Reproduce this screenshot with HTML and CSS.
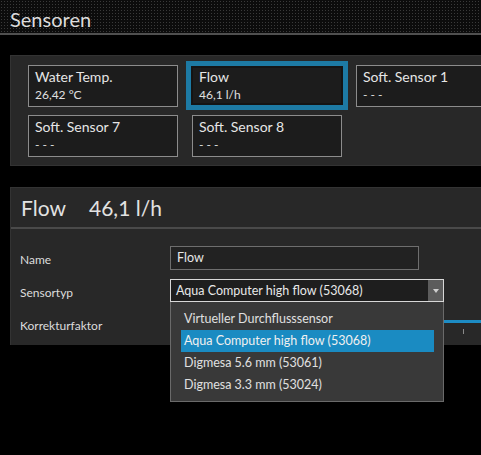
FILE: index.html
```html
<!DOCTYPE html>
<html lang="de">
<head>
<meta charset="utf-8">
<title>Sensoren</title>
<link rel="stylesheet" href="styles.css">
</head>
<body>
<header class="topbar"><h1 class="topbar-title">Sensoren</h1></header>

<section class="sensor-panel">
  <div class="sensor-grid">
    <div class="card"><div class="card-name">Water Temp.</div><div class="card-value">26,42 °C</div></div>
    <div class="card card-selected"><div class="card-name">Flow</div><div class="card-value">46,1 l/h</div></div>
    <div class="card"><div class="card-name">Soft. Sensor 1</div><div class="card-value">- - -</div></div>
    <div class="card"><div class="card-name">Soft. Sensor 2</div><div class="card-value">- - -</div></div>
    <div class="card"><div class="card-name">Soft. Sensor 7</div><div class="card-value">- - -</div></div>
    <div class="card"><div class="card-name">Soft. Sensor 8</div><div class="card-value">- - -</div></div>
  </div>
</section>

<section class="detail">
  <div class="detail-head"><span class="detail-name">Flow</span><span class="detail-value">46,1 l/h</span></div>
  <div class="detail-body">
    <div class="row"><span class="label">Name</span><div class="textbox">Flow</div></div>
    <div class="row"><span class="label">Sensortyp</span>
      <div class="combo">
        <div class="combo-box"><span class="combo-text">Aqua Computer high flow (53068)</span><span class="combo-btn"><span class="combo-arrow"></span></span></div>
        <ul class="popup">
          <li class="popup-item">Virtueller Durchflusssensor</li>
          <li class="popup-item popup-item-active">Aqua Computer high flow (53068)</li>
          <li class="popup-item">Digmesa 5.6 mm (53061)</li>
          <li class="popup-item">Digmesa 3.3 mm (53024)</li>
        </ul>
      </div>
    </div>
    <div class="row"><span class="label">Korrekturfaktor</span>
      <div class="slider"><div class="slider-track"></div><div class="slider-ticks"><span class="tick"></span><span class="tick"></span><span class="tick"></span><span class="tick"></span><span class="tick"></span><span class="tick"></span><span class="tick"></span><span class="tick"></span><span class="tick"></span><span class="tick"></span><span class="tick"></span></div></div>
    </div>
  </div>
</section>
</body>
</html>
```
FILE: styles.css
```css
html, body {
  margin: 0;
  padding: 0;
}
body {
  background: #000;
  width: 481px;
  height: 455px;
  overflow: hidden;
  font-family: Lato, "Noto Sans", sans-serif;
  color: #e2e2e2;
}
.topbar {
  height: 33px;
  box-sizing: border-box;
  background-color: #0c0c0c;
  background-image: radial-gradient(circle, #3a3a3a 0.7px, transparent 0.9px);
  background-size: 3px 3px;
  display: flex;
  align-items: center;
  padding-left: 10px;
}
.topbar::after {
  content: none;
}
body::before {
  content: none;
}
.topbar-title {
  margin: 0;
  font-weight: 400;
  font-size: 20px;
  color: #dcdcdc;
  padding-top: 5px;
}
.topbar {
  border-bottom: 2px solid #505050;
  height: 35px;
}
.sensor-panel {
  margin: 20px 0 0 10px;
  width: 640px;
  background: #282828;
  border-top: 1px solid #333;
  border-left: 1px solid #333;
  border-bottom: 1px solid #333;
  padding: 9px 0 8px 17px;
}
.sensor-grid {
  display: grid;
  grid-template-columns: repeat(4, 150px);
  column-gap: 14px;
  row-gap: 8px;
}
.card {
  height: 42px;
  box-sizing: border-box;
  border: 1px solid #8c8c8c;
  background: #1c1c1c;
  padding: 1px 6px 0;
  position: relative;
}
.card-selected::before {
  content: "";
  position: absolute;
  left: -7px;
  right: -7px;
  top: -5px;
  bottom: -4px;
  border: 5px solid #1d7aa4;
  box-shadow: inset 0 0 0 2px #141414;
  pointer-events: none;
}
.card-name {
  font-size: 14px;
  line-height: 19px;
  color: #e6e6e6;
}
.card-value {
  font-size: 12px;
  line-height: 18px;
  color: #e0e0e0;
}
.detail {
  margin: 21px 0 0 10px;
  width: 640px;
  background: #282828;
  border-left: 1px solid #333;
  border-top: 1px solid #333;
}
.detail-head {
  height: 39px;
  border-bottom: 2px solid #4a4a4a;
  display: flex;
  align-items: center;
  padding-left: 10px;
  font-size: 21px;
  color: #e2e2e2;
}
.detail-name {
  width: 68px;
}
.detail-body {
  padding: 17px 0 9px 9px;
  display: flex;
  flex-direction: column;
  gap: 9px;
}
.row {
  display: flex;
  align-items: center;
  height: 24px;
}
.label {
  width: 150px;
  font-size: 12px;
  color: #dcdcdc;
  padding-top: 2px;
}
.textbox {
  width: 249px;
  height: 24px;
  box-sizing: border-box;
  border: 1px solid #6e6e6e;
  background: #222;
  font-size: 12.5px;
  line-height: 22px;
  padding-left: 6px;
  color: #e8e8e8;
}
.combo {
  position: relative;
  width: 274px;
  align-self: flex-start;
}
.combo-box {
  height: 23px;
  box-sizing: border-box;
  border: 1px solid #d8d8d8;
  background: #1e1e1e;
  display: flex;
  align-items: center;
  justify-content: space-between;
}
.combo-text {
  font-size: 12.5px;
  padding-left: 5px;
  color: #e8e8e8;
}
.combo-btn {
  width: 15px;
  height: 21px;
  background: #5c5c5c;
  display: flex;
  align-items: center;
  justify-content: center;
}
.combo-arrow {
  width: 0;
  height: 0;
  border-left: 3px solid transparent;
  border-right: 3px solid transparent;
  border-top: 4px solid #cfcfcf;
}
.popup {
  position: absolute;
  left: 0;
  top: 23px;
  width: 274px;
  box-sizing: border-box;
  margin: 0;
  list-style: none;
  padding: 6px 9px 5px 10px;
  background: #393939;
  border: 1px solid #6a6a6a;
  border-top: none;
  z-index: 2;
}
.popup-item {
  height: 22px;
  line-height: 22px;
  font-size: 12.5px;
  padding-left: 3px;
  color: #e0e0e0;
}
.popup-item-active {
  background: #1a8bc2;
  color: #f0f0f0;
}
.slider {
  width: 400px;
  height: 24px;
  align-self: flex-start;
  display: flex;
  flex-direction: column;
}
.slider-track {
  margin-top: 8px;
  height: 3px;
  background: #1d8cc4;
}
.slider-ticks {
  display: flex;
  gap: 28px;
  padding-left: 3px;
  margin-top: 6px;
}
.tick {
  width: 1px;
  height: 5px;
  background: #8a8a8a;
}
```
